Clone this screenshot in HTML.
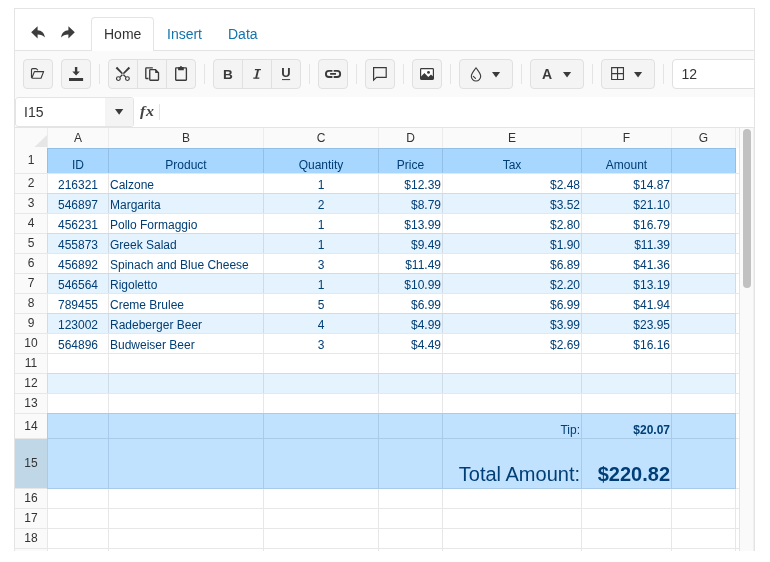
<!DOCTYPE html>
<html><head><meta charset="utf-8"><title>Spreadsheet</title>
<style>
html,body{margin:0;padding:0;background:#fff;}
body{width:770px;height:562px;overflow:hidden;position:relative;font-family:"Liberation Sans",sans-serif;font-size:14px;color:#333333;}
*{box-sizing:border-box;}
.abs,.abs *{position:absolute;}
#w{position:absolute;left:14px;top:8px;width:741px;height:543px;border:1px solid #e4e4e4;border-bottom:0;overflow:hidden;background:#fff;will-change:transform;}
#w div,#w span,#w svg{position:absolute;}
.btn{background:#f4f4f4;border:1px solid #e0e0e0;height:30px;top:50px;}
.sep{width:1px;background:#e4e4e4;top:55px;height:20px;}
.t{white-space:nowrap;line-height:1;}
.c{font-size:12px;color:rgb(0,62,117);white-space:nowrap;line-height:14px;height:14px;}
.h{font-size:12px;color:#333333;white-space:nowrap;line-height:14px;height:14px;text-align:center;}
</style></head><body>
<div id="w">

<div style="left:0;top:41px;width:739px;height:1px;background:#e4e4e4"></div>
<div style="left:76px;top:8px;width:63px;height:34px;border:1px solid #e4e4e4;border-bottom:0;border-radius:4px 4px 0 0;background:#fff"></div>
<div class="t" style="left:89px;top:18px;font-size:14px;color:#333333">Home</div>
<div class="t" style="left:152px;top:18px;font-size:14px;color:#1274ac">Insert</div>
<div class="t" style="left:213px;top:18px;font-size:14px;color:#1274ac">Data</div>
<svg style="left:16px;top:16.5px" width="15" height="13" viewBox="0 0 15 13"><path d="M0.2 6.35 L6.6 0.3 V4.2 C10.6 4.4 13.4 7 13.9 11.5 C12.2 9.4 10 8.6 6.6 8.5 V12.4 Z" fill="#3d3d3d"/></svg>
<svg style="left:45px;top:16.5px;transform:scaleX(-1)" width="15" height="13" viewBox="0 0 15 13"><path d="M0.2 6.35 L6.6 0.3 V4.2 C10.6 4.4 13.4 7 13.9 11.5 C12.2 9.4 10 8.6 6.6 8.5 V12.4 Z" fill="#3d3d3d"/></svg>
<div style="left:0;top:42px;width:739px;height:46px;background:#fafafa"></div>
<div class="btn" style="left:8px;width:30px;border-radius:4px;"></div>
<div class="btn" style="left:46px;width:30px;border-radius:4px;"></div>
<div class="sep" style="left:84px"></div>
<div class="btn" style="left:93px;width:30px;border-radius:4px 0 0 4px;"></div>
<div class="btn" style="left:122px;width:30px;border-radius:0;"></div>
<div class="btn" style="left:151px;width:30px;border-radius:0 4px 4px 0;"></div>
<div class="sep" style="left:189px"></div>
<div class="btn" style="left:198px;width:30px;border-radius:4px 0 0 4px;"></div>
<div class="btn" style="left:227px;width:30px;border-radius:0;"></div>
<div class="btn" style="left:256px;width:30px;border-radius:0 4px 4px 0;"></div>
<div class="sep" style="left:294px"></div>
<div class="btn" style="left:303px;width:30px;border-radius:4px;"></div>
<div class="sep" style="left:341px"></div>
<div class="btn" style="left:350px;width:30px;border-radius:4px;"></div>
<div class="sep" style="left:388px"></div>
<div class="btn" style="left:397px;width:30px;border-radius:4px;"></div>
<div class="sep" style="left:435px"></div>
<div class="btn" style="left:444px;width:54px;border-radius:4px;"></div>
<div class="sep" style="left:506px"></div>
<div class="btn" style="left:515px;width:54px;border-radius:4px;"></div>
<div class="sep" style="left:577px"></div>
<div class="btn" style="left:586px;width:54px;border-radius:4px;"></div>
<div class="sep" style="left:648px"></div>
<div style="left:657px;top:50px;width:120px;height:30px;border:1px solid #e0e0e0;border-radius:4px;background:#fff"></div>
<div class="t" style="left:666.5px;top:58px;font-size:14px">12</div>
<svg style="left:0;top:42px" width="739" height="46" viewBox="15 51 739 46" fill="none" stroke="none">
<g transform="translate(30.9,68)"><path d="M6.7 1.9 L5.2 0.6 H1.7 Q0.6 0.6 0.6 1.7 V9.3 Q0.6 10.2 1.7 10.2 H10.1 L12.7 3.6 H3.5 L1.0 10.0" stroke="#3a3a3a" stroke-width="1.15" stroke-linejoin="round" stroke-linecap="round"/></g>
<g transform="translate(69,66.9)"><path d="M5.9 0H8.3V4.5H10.9L7.1 8.6L3.3 4.5H5.9Z M0 11.1H14.1V14H0Z" fill="#3a3a3a"/></g>
<g transform="translate(115.5,66.5)"><g stroke="#3a3a3a" fill="none"><circle cx="2.9" cy="12.1" r="1.9" stroke-width="1.15"/><circle cx="11.9" cy="12.1" r="1.9" stroke-width="1.15"/></g><path d="M1.66 0.16 L0.14 1.64 L9.87 11.02 L10.73 10.18 Z M13.14 0.16 L14.66 1.64 L4.93 11.02 L4.07 10.18 Z" fill="#3a3a3a"/></g>
<g transform="translate(145,67)"><path d="M7.8 0.8 H1.4 Q0.8 0.8 0.8 1.4 V10.9 Q0.8 11.5 1.4 11.5 H3.5" stroke="#3a3a3a" stroke-width="1.35"/><path d="M5.35 2.65 H10.5 L13.5 5.7 V12.6 Q13.5 13.2 12.9 13.2 H5.35 Q4.75 13.2 4.75 12.6 V3.25 Q4.75 2.65 5.35 2.65 Z" stroke="#3a3a3a" stroke-width="1.35" stroke-linejoin="miter"/><path d="M10.2 2.3 L14.0 6.1 H10.2Z" fill="#3a3a3a"/></g>
<g transform="translate(174.5,65.5)"><rect x="1.2" y="2.3" width="10.7" height="12.4" rx="0.6" stroke="#3a3a3a" stroke-width="1.35"/><path d="M3.6 4.7 V2.2 Q3.6 1.6 4.3 1.6 H5.4 Q5.6 0.5 6.45 0.5 Q7.3 0.5 7.5 1.6 H8.6 Q9.3 1.6 9.3 2.2 V4.7 Z" fill="#3a3a3a"/></g>
<text x="227.9" y="78.7" text-anchor="middle" font-family="Liberation Sans" font-weight="bold" font-size="13.6" fill="#3a3a3a">B</text>
<path d="M254.9 69.6 H260.9 M253.3 78.1 H259.3" stroke="#3a3a3a" stroke-width="1.2"/><path d="M258.1 69.6 L256.1 78.1" stroke="#3a3a3a" stroke-width="1.9"/>
<text x="286" y="77.1" text-anchor="middle" font-family="Liberation Sans" font-weight="bold" font-size="13" fill="#3a3a3a">U</text>
<rect x="282" y="79.1" width="8.1" height="1" fill="#3a3a3a"/>
<g transform="translate(324.9,69.8)"><path d="M7.5 1.05 H4.05 A3.05 3.05 0 0 0 4.05 7.15 H7.5 M8.8 1.05 H12.25 A3.05 3.05 0 0 1 12.25 7.15 H8.8 M5.2 4.1 H11.1" stroke="#3a3a3a" stroke-width="1.85"/></g>
<g transform="translate(372.5,66.5)"><path d="M1.1 1.2 H13.7 V10.9 H4.0 L1.1 13.6 Z" stroke="#3a3a3a" stroke-width="1.2" stroke-linejoin="miter"/></g>
<g transform="translate(420,68)"><rect x="0.6" y="0.6" width="12.8" height="10.7" rx="0.8" fill="#fff" stroke="#3a3a3a" stroke-width="1.2"/><path d="M0.6 9.0 L4.4 5.0 L8.3 8.9 L11.0 6.6 L13.4 8.8 V11.3 H0.6 Z" fill="#3a3a3a"/><circle cx="8.5" cy="4.4" r="1.45" fill="#3a3a3a"/></g>
<g transform="translate(470,67)"><path d="M6 0.8 C7.6 3.2 10.7 6.4 10.7 9.3 A4.7 4.7 0 0 1 1.3 9.3 C1.3 6.4 4.4 3.2 6 0.8 Z" stroke="#3a3a3a" stroke-width="1.1" stroke-linejoin="round"/><path d="M3.3 9.3 L5.5 11.4" stroke="#3a3a3a" stroke-width="1.1" stroke-linecap="round"/></g>
<text x="547" y="78.9" text-anchor="middle" font-family="Liberation Sans" font-weight="bold" font-size="14" fill="#3a3a3a">A</text>
<g transform="translate(611,67)"><path d="M0.65 0.65 H12.45 V12.45 H0.65 Z M6.55 0.65 V12.45 M0.65 6.55 H12.45" stroke="#3a3a3a" stroke-width="1.15"/></g>
<g transform="translate(492,72)"><path d="M0 0 H8.1 L4.05 5.6 Z" fill="#3a3a3a"/></g>
<g transform="translate(563,72)"><path d="M0 0 H8.1 L4.05 5.6 Z" fill="#3a3a3a"/></g>
<g transform="translate(634,72)"><path d="M0 0 H8.1 L4.05 5.6 Z" fill="#3a3a3a"/></g>
</svg>
<div style="left:0;top:88px;width:119px;height:30px;border:1px solid #e4e4e4;border-radius:3px;background:#fff"></div>
<div style="left:90px;top:89px;width:28px;height:28px;background:#f4f4f4;border-radius:0 3px 3px 0"></div>
<div class="t" style="left:9px;top:96px;font-size:14px">I15</div>
<svg style="left:99.9px;top:99.9px" width="9" height="6" viewBox="0 0 9 6"><path d="M0 0H8.3L4.15 5.7Z" fill="#3a3a3a"/></svg>
<div class="t" style="left:125.4px;top:95.2px;font-family:'Liberation Serif',serif;font-style:italic;font-weight:bold;font-size:14.5px;letter-spacing:0.6px;transform:scaleX(1.1);transform-origin:0 0;color:#444">fx</div>
<div style="left:144px;top:95px;width:1px;height:16px;background:#e4e4e4"></div>
<div style="left:0;top:118px;width:724px;height:21px;background:#fafafa"></div>
<div style="left:0;top:139px;width:32px;height:420px;background:#fafafa"></div>
<div style="left:0;top:118px;width:724px;height:1px;background:#e4e4e4"></div>
<div style="left:0;top:430px;width:32px;height:49px;background:#c0d7e7"></div>
<svg style="left:19px;top:126px" width="13" height="12" viewBox="0 0 13 12"><path d="M13 0V12H0.5Z" fill="#e6e6e6"/></svg>
<div style="left:0;top:164px;width:724px;height:1px;background:#e7e7e7"></div>
<div style="left:0;top:184px;width:724px;height:1px;background:#e7e7e7"></div>
<div style="left:0;top:204px;width:724px;height:1px;background:#e7e7e7"></div>
<div style="left:0;top:224px;width:724px;height:1px;background:#e7e7e7"></div>
<div style="left:0;top:244px;width:724px;height:1px;background:#e7e7e7"></div>
<div style="left:0;top:264px;width:724px;height:1px;background:#e7e7e7"></div>
<div style="left:0;top:284px;width:724px;height:1px;background:#e7e7e7"></div>
<div style="left:0;top:304px;width:724px;height:1px;background:#e7e7e7"></div>
<div style="left:0;top:324px;width:724px;height:1px;background:#e7e7e7"></div>
<div style="left:0;top:344px;width:724px;height:1px;background:#e7e7e7"></div>
<div style="left:0;top:364px;width:724px;height:1px;background:#e7e7e7"></div>
<div style="left:0;top:384px;width:724px;height:1px;background:#e7e7e7"></div>
<div style="left:0;top:404px;width:724px;height:1px;background:#e7e7e7"></div>
<div style="left:0;top:429px;width:724px;height:1px;background:#e7e7e7"></div>
<div style="left:0;top:479px;width:724px;height:1px;background:#e7e7e7"></div>
<div style="left:0;top:499px;width:724px;height:1px;background:#e7e7e7"></div>
<div style="left:0;top:519px;width:724px;height:1px;background:#e7e7e7"></div>
<div style="left:0;top:539px;width:724px;height:1px;background:#e7e7e7"></div>
<div style="left:32px;top:119px;width:1px;height:424px;background:#e7e7e7"></div>
<div style="left:93px;top:119px;width:1px;height:424px;background:#e7e7e7"></div>
<div style="left:248px;top:119px;width:1px;height:424px;background:#e7e7e7"></div>
<div style="left:363px;top:119px;width:1px;height:424px;background:#e7e7e7"></div>
<div style="left:427px;top:119px;width:1px;height:424px;background:#e7e7e7"></div>
<div style="left:566px;top:119px;width:1px;height:424px;background:#e7e7e7"></div>
<div style="left:656px;top:119px;width:1px;height:424px;background:#e7e7e7"></div>
<div style="left:720px;top:119px;width:1px;height:424px;background:#e7e7e7"></div>
<div style="left:32px;top:119px;width:1px;height:20px;background:#ececec"></div>
<div style="left:93px;top:119px;width:1px;height:20px;background:#ececec"></div>
<div style="left:248px;top:119px;width:1px;height:20px;background:#ececec"></div>
<div style="left:363px;top:119px;width:1px;height:20px;background:#ececec"></div>
<div style="left:427px;top:119px;width:1px;height:20px;background:#ececec"></div>
<div style="left:566px;top:119px;width:1px;height:20px;background:#ececec"></div>
<div style="left:656px;top:119px;width:1px;height:20px;background:#ececec"></div>
<div style="left:720px;top:119px;width:1px;height:20px;background:#ececec"></div>
<div style="left:32px;top:139px;width:689px;height:25px;background:rgb(167,214,255);border:1px solid #93bfe6;border-bottom:0;"></div>
<div style="left:93px;top:140px;width:1px;height:24px;background:#93bfe6"></div>
<div style="left:248px;top:140px;width:1px;height:24px;background:#93bfe6"></div>
<div style="left:363px;top:140px;width:1px;height:24px;background:#93bfe6"></div>
<div style="left:427px;top:140px;width:1px;height:24px;background:#93bfe6"></div>
<div style="left:566px;top:140px;width:1px;height:24px;background:#93bfe6"></div>
<div style="left:656px;top:140px;width:1px;height:24px;background:#93bfe6"></div>
<div style="left:32px;top:184px;width:689px;height:20px;background:rgb(229,243,255);border:1px solid #cfdce8;border-bottom:0;"></div>
<div style="left:93px;top:185px;width:1px;height:19px;background:#cfdce8"></div>
<div style="left:248px;top:185px;width:1px;height:19px;background:#cfdce8"></div>
<div style="left:363px;top:185px;width:1px;height:19px;background:#cfdce8"></div>
<div style="left:427px;top:185px;width:1px;height:19px;background:#cfdce8"></div>
<div style="left:566px;top:185px;width:1px;height:19px;background:#cfdce8"></div>
<div style="left:656px;top:185px;width:1px;height:19px;background:#cfdce8"></div>
<div style="left:32px;top:224px;width:689px;height:20px;background:rgb(229,243,255);border:1px solid #cfdce8;border-bottom:0;"></div>
<div style="left:93px;top:225px;width:1px;height:19px;background:#cfdce8"></div>
<div style="left:248px;top:225px;width:1px;height:19px;background:#cfdce8"></div>
<div style="left:363px;top:225px;width:1px;height:19px;background:#cfdce8"></div>
<div style="left:427px;top:225px;width:1px;height:19px;background:#cfdce8"></div>
<div style="left:566px;top:225px;width:1px;height:19px;background:#cfdce8"></div>
<div style="left:656px;top:225px;width:1px;height:19px;background:#cfdce8"></div>
<div style="left:32px;top:264px;width:689px;height:20px;background:rgb(229,243,255);border:1px solid #cfdce8;border-bottom:0;"></div>
<div style="left:93px;top:265px;width:1px;height:19px;background:#cfdce8"></div>
<div style="left:248px;top:265px;width:1px;height:19px;background:#cfdce8"></div>
<div style="left:363px;top:265px;width:1px;height:19px;background:#cfdce8"></div>
<div style="left:427px;top:265px;width:1px;height:19px;background:#cfdce8"></div>
<div style="left:566px;top:265px;width:1px;height:19px;background:#cfdce8"></div>
<div style="left:656px;top:265px;width:1px;height:19px;background:#cfdce8"></div>
<div style="left:32px;top:304px;width:689px;height:20px;background:rgb(229,243,255);border:1px solid #cfdce8;border-bottom:0;"></div>
<div style="left:93px;top:305px;width:1px;height:19px;background:#cfdce8"></div>
<div style="left:248px;top:305px;width:1px;height:19px;background:#cfdce8"></div>
<div style="left:363px;top:305px;width:1px;height:19px;background:#cfdce8"></div>
<div style="left:427px;top:305px;width:1px;height:19px;background:#cfdce8"></div>
<div style="left:566px;top:305px;width:1px;height:19px;background:#cfdce8"></div>
<div style="left:656px;top:305px;width:1px;height:19px;background:#cfdce8"></div>
<div style="left:32px;top:364px;width:689px;height:20px;background:rgb(229,243,255);border:1px solid #cfdce8;border-bottom:0;"></div>
<div style="left:93px;top:365px;width:1px;height:19px;background:#cfdce8"></div>
<div style="left:248px;top:365px;width:1px;height:19px;background:#cfdce8"></div>
<div style="left:363px;top:365px;width:1px;height:19px;background:#cfdce8"></div>
<div style="left:427px;top:365px;width:1px;height:19px;background:#cfdce8"></div>
<div style="left:566px;top:365px;width:1px;height:19px;background:#cfdce8"></div>
<div style="left:656px;top:365px;width:1px;height:19px;background:#cfdce8"></div>
<div style="left:32px;top:404px;width:689px;height:26px;background:rgb(193,226,255);border:1px solid #a9cbe9;"></div>
<div style="left:93px;top:405px;width:1px;height:24px;background:#a9cbe9"></div>
<div style="left:248px;top:405px;width:1px;height:24px;background:#a9cbe9"></div>
<div style="left:363px;top:405px;width:1px;height:24px;background:#a9cbe9"></div>
<div style="left:427px;top:405px;width:1px;height:24px;background:#a9cbe9"></div>
<div style="left:566px;top:405px;width:1px;height:24px;background:#a9cbe9"></div>
<div style="left:656px;top:405px;width:1px;height:24px;background:#a9cbe9"></div>
<div style="left:32px;top:429px;width:689px;height:51px;background:rgb(193,226,255);border:1px solid #a9cbe9;"></div>
<div style="left:93px;top:430px;width:1px;height:49px;background:#a9cbe9"></div>
<div style="left:248px;top:430px;width:1px;height:49px;background:#a9cbe9"></div>
<div style="left:363px;top:430px;width:1px;height:49px;background:#a9cbe9"></div>
<div style="left:427px;top:430px;width:1px;height:49px;background:#a9cbe9"></div>
<div style="left:566px;top:430px;width:1px;height:49px;background:#a9cbe9"></div>
<div style="left:656px;top:430px;width:1px;height:49px;background:#a9cbe9"></div>
<div class="h" style="left:33px;top:122px;width:60px">A</div>
<div class="h" style="left:94px;top:122px;width:154px">B</div>
<div class="h" style="left:249px;top:122px;width:114px">C</div>
<div class="h" style="left:364px;top:122px;width:63px">D</div>
<div class="h" style="left:428px;top:122px;width:138px">E</div>
<div class="h" style="left:567px;top:122px;width:89px">F</div>
<div class="h" style="left:657px;top:122px;width:63px">G</div>
<div class="h" style="left:0;top:144.0px;width:32px">1</div>
<div class="h" style="left:0;top:166.5px;width:32px">2</div>
<div class="h" style="left:0;top:186.5px;width:32px">3</div>
<div class="h" style="left:0;top:206.5px;width:32px">4</div>
<div class="h" style="left:0;top:226.5px;width:32px">5</div>
<div class="h" style="left:0;top:246.5px;width:32px">6</div>
<div class="h" style="left:0;top:266.5px;width:32px">7</div>
<div class="h" style="left:0;top:286.5px;width:32px">8</div>
<div class="h" style="left:0;top:306.5px;width:32px">9</div>
<div class="h" style="left:0;top:326.5px;width:32px">10</div>
<div class="h" style="left:0;top:346.5px;width:32px">11</div>
<div class="h" style="left:0;top:366.5px;width:32px">12</div>
<div class="h" style="left:0;top:386.5px;width:32px">13</div>
<div class="h" style="left:0;top:410.0px;width:32px">14</div>
<div class="h" style="left:0;top:446.5px;width:32px">15</div>
<div class="h" style="left:0;top:481.5px;width:32px">16</div>
<div class="h" style="left:0;top:501.5px;width:32px">17</div>
<div class="h" style="left:0;top:521.5px;width:32px">18</div>
<div class="c" style="left:34px;top:149px;width:58px;text-align:center;">ID</div>
<div class="c" style="left:95px;top:149px;width:152px;text-align:center;">Product</div>
<div class="c" style="left:250px;top:149px;width:112px;text-align:center;">Quantity</div>
<div class="c" style="left:365px;top:149px;width:61px;text-align:center;">Price</div>
<div class="c" style="left:429px;top:149px;width:136px;text-align:center;">Tax</div>
<div class="c" style="left:568px;top:149px;width:87px;text-align:center;">Amount</div>
<div class="c" style="left:34px;top:169px;width:58px;text-align:center;">216321</div>
<div class="c" style="left:95px;top:169px;width:152px;text-align:left;">Calzone</div>
<div class="c" style="left:250px;top:169px;width:112px;text-align:center;">1</div>
<div class="c" style="left:365px;top:169px;width:61px;text-align:right;">$12.39</div>
<div class="c" style="left:429px;top:169px;width:136px;text-align:right;">$2.48</div>
<div class="c" style="left:568px;top:169px;width:87px;text-align:right;">$14.87</div>
<div class="c" style="left:34px;top:189px;width:58px;text-align:center;">546897</div>
<div class="c" style="left:95px;top:189px;width:152px;text-align:left;">Margarita</div>
<div class="c" style="left:250px;top:189px;width:112px;text-align:center;">2</div>
<div class="c" style="left:365px;top:189px;width:61px;text-align:right;">$8.79</div>
<div class="c" style="left:429px;top:189px;width:136px;text-align:right;">$3.52</div>
<div class="c" style="left:568px;top:189px;width:87px;text-align:right;">$21.10</div>
<div class="c" style="left:34px;top:209px;width:58px;text-align:center;">456231</div>
<div class="c" style="left:95px;top:209px;width:152px;text-align:left;">Pollo Formaggio</div>
<div class="c" style="left:250px;top:209px;width:112px;text-align:center;">1</div>
<div class="c" style="left:365px;top:209px;width:61px;text-align:right;">$13.99</div>
<div class="c" style="left:429px;top:209px;width:136px;text-align:right;">$2.80</div>
<div class="c" style="left:568px;top:209px;width:87px;text-align:right;">$16.79</div>
<div class="c" style="left:34px;top:229px;width:58px;text-align:center;">455873</div>
<div class="c" style="left:95px;top:229px;width:152px;text-align:left;">Greek Salad</div>
<div class="c" style="left:250px;top:229px;width:112px;text-align:center;">1</div>
<div class="c" style="left:365px;top:229px;width:61px;text-align:right;">$9.49</div>
<div class="c" style="left:429px;top:229px;width:136px;text-align:right;">$1.90</div>
<div class="c" style="left:568px;top:229px;width:87px;text-align:right;">$11.39</div>
<div class="c" style="left:34px;top:249px;width:58px;text-align:center;">456892</div>
<div class="c" style="left:95px;top:249px;width:152px;text-align:left;">Spinach and Blue Cheese</div>
<div class="c" style="left:250px;top:249px;width:112px;text-align:center;">3</div>
<div class="c" style="left:365px;top:249px;width:61px;text-align:right;">$11.49</div>
<div class="c" style="left:429px;top:249px;width:136px;text-align:right;">$6.89</div>
<div class="c" style="left:568px;top:249px;width:87px;text-align:right;">$41.36</div>
<div class="c" style="left:34px;top:269px;width:58px;text-align:center;">546564</div>
<div class="c" style="left:95px;top:269px;width:152px;text-align:left;">Rigoletto</div>
<div class="c" style="left:250px;top:269px;width:112px;text-align:center;">1</div>
<div class="c" style="left:365px;top:269px;width:61px;text-align:right;">$10.99</div>
<div class="c" style="left:429px;top:269px;width:136px;text-align:right;">$2.20</div>
<div class="c" style="left:568px;top:269px;width:87px;text-align:right;">$13.19</div>
<div class="c" style="left:34px;top:289px;width:58px;text-align:center;">789455</div>
<div class="c" style="left:95px;top:289px;width:152px;text-align:left;">Creme Brulee</div>
<div class="c" style="left:250px;top:289px;width:112px;text-align:center;">5</div>
<div class="c" style="left:365px;top:289px;width:61px;text-align:right;">$6.99</div>
<div class="c" style="left:429px;top:289px;width:136px;text-align:right;">$6.99</div>
<div class="c" style="left:568px;top:289px;width:87px;text-align:right;">$41.94</div>
<div class="c" style="left:34px;top:309px;width:58px;text-align:center;">123002</div>
<div class="c" style="left:95px;top:309px;width:152px;text-align:left;">Radeberger Beer</div>
<div class="c" style="left:250px;top:309px;width:112px;text-align:center;">4</div>
<div class="c" style="left:365px;top:309px;width:61px;text-align:right;">$4.99</div>
<div class="c" style="left:429px;top:309px;width:136px;text-align:right;">$3.99</div>
<div class="c" style="left:568px;top:309px;width:87px;text-align:right;">$23.95</div>
<div class="c" style="left:34px;top:329px;width:58px;text-align:center;">564896</div>
<div class="c" style="left:95px;top:329px;width:152px;text-align:left;">Budweiser Beer</div>
<div class="c" style="left:250px;top:329px;width:112px;text-align:center;">3</div>
<div class="c" style="left:365px;top:329px;width:61px;text-align:right;">$4.49</div>
<div class="c" style="left:429px;top:329px;width:136px;text-align:right;">$2.69</div>
<div class="c" style="left:568px;top:329px;width:87px;text-align:right;">$16.16</div>
<div class="c" style="left:429px;top:414px;width:136px;text-align:right;">Tip:</div>
<div class="c" style="left:568px;top:414px;width:87px;text-align:right;font-weight:bold;">$20.07</div>
<div class="c" style="left:429px;top:454px;width:136px;text-align:right;font-size:20px;line-height:23px;height:23px;">Total Amount:</div>
<div class="c" style="left:568px;top:454px;width:87px;text-align:right;font-size:20px;line-height:23px;height:23px;font-weight:bold;">$220.82</div>
<div style="left:724px;top:118px;width:15px;height:430px;background:#fafafa;border-left:1px solid #e4e4e4;border-top:1px solid #e4e4e4;border-right:1px solid #f0f0f0"></div>
<div style="left:728px;top:120px;width:8px;height:159px;border-radius:4px;background:#c1c1c1"></div>
</div>
</body></html>
